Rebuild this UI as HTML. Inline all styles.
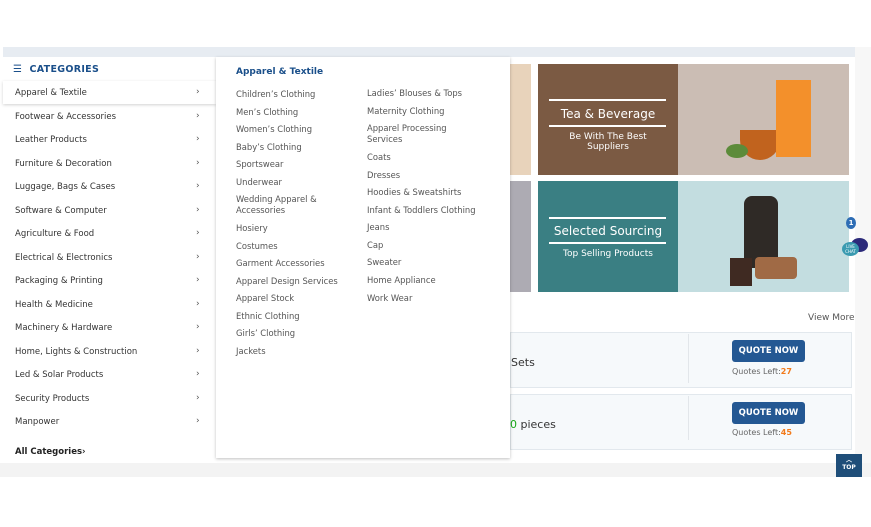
<!DOCTYPE html>
<html><head><meta charset="utf-8"><style>
*{margin:0;padding:0;box-sizing:border-box}
body{width:871px;height:527px;background:#fff;position:relative;overflow:hidden;font-family:"DejaVu Sans",Verdana,sans-serif;color:#333}
.a{position:absolute}
.side{left:3px;top:57px;width:213px;height:406px;background:#fff}
.it{position:absolute;left:12px;font-size:8.5px;color:#333;white-space:nowrap}
.ch{position:absolute;left:193px;font-size:9px;color:#555}
.dd{left:216px;top:57px;width:294px;height:401px;background:#fff;box-shadow:0 1px 3px rgba(0,0,0,.25)}
.s{position:absolute;font-size:8.4px;color:#555;line-height:11px;white-space:nowrap}
.btn{position:absolute;width:73px;height:22px;background:#245893;border-radius:3px;color:#fff;font-weight:bold;font-size:8.5px;text-align:center;line-height:22px}
.ql{position:absolute;font-size:8px;color:#666}
.ql b{color:#f27a1a}
</style></head><body>
<div class="a" style="left:3px;top:47px;width:852px;height:10px;background:#e7ecf2"></div>
<div class="a" style="left:855px;top:47px;width:16px;height:416px;background:#f7f7f7"></div>
<div class="a" style="left:0;top:463px;width:871px;height:14px;background:#f3f3f3"></div>

<!-- banners -->
<div class="a" style="left:510px;top:64px;width:21px;height:111px;background:#e8d3bb"></div>
<div class="a" style="left:538px;top:64px;width:140px;height:111px;background:#7b5a43"></div>
<div class="a" style="left:678px;top:64px;width:171px;height:111px;background:#cbbdb4"></div>
<div class="a" style="left:549px;top:99px;width:117px;height:2px;background:#fff"></div>
<div class="a" style="left:538px;top:107px;width:140px;text-align:center;color:#fff;font-size:12px">Tea &amp; Beverage</div>
<div class="a" style="left:549px;top:125px;width:117px;height:2px;background:#fff"></div>
<div class="a" style="left:538px;top:132px;width:140px;text-align:center;color:#fff;font-size:9px;line-height:10px">Be With The Best<br>Suppliers</div>
<div class="a" style="left:740px;top:130px;width:40px;height:30px;border-radius:0 0 20px 20px;background:#c1631e"></div>
<div class="a" style="left:776px;top:80px;width:35px;height:77px;background:#f3902b"></div>
<div class="a" style="left:726px;top:144px;width:22px;height:14px;border-radius:50%;background:#5c8b3a"></div>

<div class="a" style="left:510px;top:181px;width:21px;height:111px;background:#adabb3"></div>
<div class="a" style="left:538px;top:181px;width:140px;height:111px;background:#3a7f83"></div>
<div class="a" style="left:678px;top:181px;width:171px;height:111px;background:#c3dde0"></div>
<div class="a" style="left:549px;top:217px;width:117px;height:2px;background:#fff"></div>
<div class="a" style="left:538px;top:224px;width:140px;text-align:center;color:#fff;font-size:12px">Selected Sourcing</div>
<div class="a" style="left:549px;top:242px;width:117px;height:2px;background:#fff"></div>
<div class="a" style="left:538px;top:249px;width:140px;text-align:center;color:#fff;font-size:9px">Top Selling Products</div>
<div class="a" style="left:744px;top:196px;width:34px;height:72px;border-radius:8px 8px 4px 4px;background:#2f2a26"></div>
<div class="a" style="left:755px;top:257px;width:42px;height:22px;border-radius:4px;background:#a06a45"></div>
<div class="a" style="left:730px;top:258px;width:22px;height:28px;background:#3f2a22"></div>

<div class="a" style="left:846px;top:217px;width:10px;height:12px;border-radius:50%;background:#2e6db5;color:#fff;font-size:7px;font-weight:bold;text-align:center;line-height:12px">1</div>
<div class="a" style="left:851px;top:238px;width:17px;height:14px;border-radius:50%;background:#2c2a7a"></div>
<div class="a" style="left:842px;top:242px;width:17px;height:14px;border-radius:50%;background:#3a9ab0;color:#fff;font-size:4px;text-align:center;line-height:5px;padding-top:2px">LIVE<br>CHAT</div>

<div class="a" style="left:808px;top:313px;font-size:9px;color:#555">View More</div>
<div class="a" style="left:510px;top:332px;width:342px;height:56px;background:#f6f9fb;border:1px solid #e2e8ed"></div>
<div class="a" style="left:688px;top:334px;width:1px;height:49px;background:#e2e6ea"></div>
<div class="a" style="left:511px;top:356px;font-size:11px;color:#333">Sets</div>
<div class="btn" style="left:732px;top:340px">QUOTE NOW</div>
<div class="ql" style="left:732px;top:367px">Quotes Left:<b>27</b></div>
<div class="a" style="left:510px;top:394px;width:342px;height:56px;background:#f6f9fb;border:1px solid #e2e8ed"></div>
<div class="a" style="left:688px;top:396px;width:1px;height:44px;background:#e2e6ea"></div>
<div class="a" style="left:510px;top:418px;font-size:11px;color:#333"><span style="color:#1aa81a">0</span> pieces</div>
<div class="btn" style="left:732px;top:402px">QUOTE NOW</div>
<div class="ql" style="left:732px;top:428px">Quotes Left:<b>45</b></div>
<div class="a" style="left:836px;top:454px;width:26px;height:23px;background:#1f4e79;color:#fff;font-size:6px;font-weight:bold;text-align:center;line-height:7px;padding-top:3px">︿<br>TOP</div>

<!-- sidebar -->
<div class="a side">
<div class="a" style="left:10px;top:7px;font-size:9.5px;font-weight:bold;color:#1a4f8a;letter-spacing:.3px"><span style="font-size:10px">☰</span>&nbsp; CATEGORIES</div>
<div class="a" style="left:0;top:24px;width:213px;height:23px;background:#fff;box-shadow:0 1px 3px rgba(0,0,0,.18)"></div>
<div class="it" style="top:31px">Apparel &amp; Textile</div><div class="ch" style="top:30px">›</div>
<div class="it" style="top:55px">Footwear &amp; Accessories</div><div class="ch" style="top:54px">›</div>
<div class="it" style="top:78px">Leather Products</div><div class="ch" style="top:77px">›</div>
<div class="it" style="top:102px">Furniture &amp; Decoration</div><div class="ch" style="top:101px">›</div>
<div class="it" style="top:125px">Luggage, Bags &amp; Cases</div><div class="ch" style="top:124px">›</div>
<div class="it" style="top:149px">Software &amp; Computer</div><div class="ch" style="top:148px">›</div>
<div class="it" style="top:172px">Agriculture &amp; Food</div><div class="ch" style="top:171px">›</div>
<div class="it" style="top:196px">Electrical &amp; Electronics</div><div class="ch" style="top:195px">›</div>
<div class="it" style="top:219px">Packaging &amp; Printing</div><div class="ch" style="top:218px">›</div>
<div class="it" style="top:243px">Health &amp; Medicine</div><div class="ch" style="top:242px">›</div>
<div class="it" style="top:266px">Machinery &amp; Hardware</div><div class="ch" style="top:265px">›</div>
<div class="it" style="top:290px">Home, Lights &amp; Construction</div><div class="ch" style="top:289px">›</div>
<div class="it" style="top:313px">Led &amp; Solar Products</div><div class="ch" style="top:312px">›</div>
<div class="it" style="top:337px">Security Products</div><div class="ch" style="top:336px">›</div>
<div class="it" style="top:360px">Manpower</div><div class="ch" style="top:359px">›</div>
<div class="it" style="top:390px;font-weight:bold;color:#222">All Categories›</div>
</div>

<!-- dropdown -->
<div class="a dd">
<div class="a" style="left:20px;top:10px;font-size:9px;font-weight:bold;color:#1a4f8a">Apparel &amp; Textile</div>
<div class="s" style="left:20px;top:32px">Children’s Clothing</div>
<div class="s" style="left:20px;top:50px">Men’s Clothing</div>
<div class="s" style="left:20px;top:67px">Women’s Clothing</div>
<div class="s" style="left:20px;top:85px">Baby’s Clothing</div>
<div class="s" style="left:20px;top:102px">Sportswear</div>
<div class="s" style="left:20px;top:120px">Underwear</div>
<div class="s" style="left:20px;top:137px">Wedding Apparel &amp;<br>Accessories</div>
<div class="s" style="left:20px;top:166px">Hosiery</div>
<div class="s" style="left:20px;top:184px">Costumes</div>
<div class="s" style="left:20px;top:201px">Garment Accessories</div>
<div class="s" style="left:20px;top:219px">Apparel Design Services</div>
<div class="s" style="left:20px;top:236px">Apparel Stock</div>
<div class="s" style="left:20px;top:254px">Ethnic Clothing</div>
<div class="s" style="left:20px;top:271px">Girls’ Clothing</div>
<div class="s" style="left:20px;top:289px">Jackets</div>
<div class="s" style="left:151px;top:31px">Ladies’ Blouses &amp; Tops</div>
<div class="s" style="left:151px;top:49px">Maternity Clothing</div>
<div class="s" style="left:151px;top:66px">Apparel Processing<br>Services</div>
<div class="s" style="left:151px;top:95px">Coats</div>
<div class="s" style="left:151px;top:113px">Dresses</div>
<div class="s" style="left:151px;top:130px">Hoodies &amp; Sweatshirts</div>
<div class="s" style="left:151px;top:148px">Infant &amp; Toddlers Clothing</div>
<div class="s" style="left:151px;top:165px">Jeans</div>
<div class="s" style="left:151px;top:183px">Cap</div>
<div class="s" style="left:151px;top:200px">Sweater</div>
<div class="s" style="left:151px;top:218px">Home Appliance</div>
<div class="s" style="left:151px;top:236px">Work Wear</div>
</div>
</body></html>
